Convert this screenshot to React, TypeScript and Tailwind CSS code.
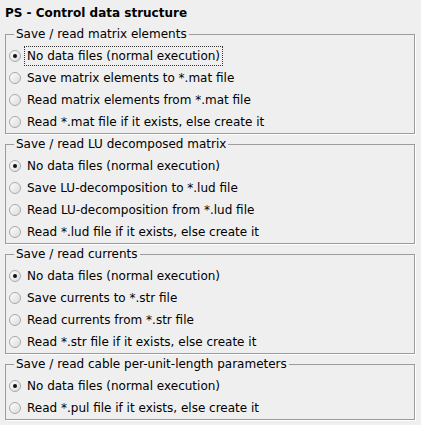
const groups = [
  {
    title: "Save / read matrix elements",
    options: [
      "No data files (normal execution)",
      "Save matrix elements to *.mat file",
      "Read matrix elements from *.mat file",
      "Read *.mat file if it exists, else create it",
    ],
    focused: true,
  },
  {
    title: "Save / read LU decomposed matrix",
    options: [
      "No data files (normal execution)",
      "Save LU-decomposition to *.lud file",
      "Read LU-decomposition from *.lud file",
      "Read *.lud file if it exists, else create it",
    ],
  },
  {
    title: "Save / read currents",
    options: [
      "No data files (normal execution)",
      "Save currents to *.str file",
      "Read currents from *.str file",
      "Read *.str file if it exists, else create it",
    ],
  },
  {
    title: "Save / read cable per-unit-length parameters",
    options: [
      "No data files (normal execution)",
      "Read *.pul file if it exists, else create it",
    ],
  },
];

const Radio = ({ checked }: { checked: boolean }) => (
  <div className="w-[12px] h-[12px] rounded-full border border-[#a9a9a9] bg-gradient-to-br from-[#fdfdfd] to-[#dcdcdc] flex items-center justify-center shrink-0">
    {checked && <div className="w-[4px] h-[4px] rounded-full bg-[#111]" />}
  </div>
);

const App = () => {
  return (
    <div
      className="w-[421px] h-[425px] bg-[#efefef] text-black text-[12px] overflow-hidden"
      style={{ fontFamily: '"DejaVu Sans", sans-serif' }}
    >
      <div className="h-[25px] flex items-center pl-[5px] font-bold text-[12px]">
        PS - Control data structure
      </div>
      <div className="flex flex-col gap-[3px] pt-[2px]">
        {groups.map((g) => (
          <fieldset
            key={g.title}
            className="ml-[5px] mr-[6px] border border-[#9c9c9c] shadow-[1px_1px_0_#fff]"
          >
            <legend className="ml-[8px] px-[2px] leading-[14px]">{g.title}</legend>
            <div className="flex flex-col pt-[4px]">
              {g.options.map((o, i) => (
                <div key={o} className="h-[22px] flex items-center pl-[3px]">
                  <Radio checked={i === 0} />
                  <span
                    className={
                      "ml-[3px] px-[2px] h-[20px] leading-[18px] border border-dotted " +
                      (g.focused && i === 0 ? "border-[#333]" : "border-transparent")
                    }
                  >
                    {o}
                  </span>
                </div>
              ))}
            </div>
          </fieldset>
        ))}
      </div>
    </div>
  );
};

export default App;
